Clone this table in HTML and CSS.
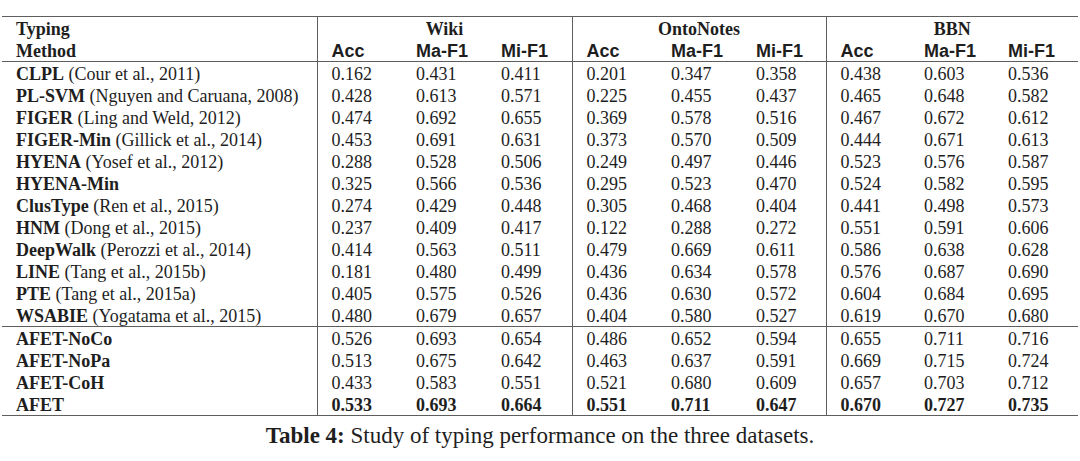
FILE: index.html
```html
<!DOCTYPE html>
<html lang="en">
<head>
<meta charset="utf-8">
<title>Table 4</title>
<link rel="stylesheet" href="styles.css">
</head>
<body>
<div class="page">
  <table class="results">
    <colgroup>
      <col class="c-method">
      <col class="c-num"><col class="c-num"><col class="c-num">
      <col class="c-num"><col class="c-num"><col class="c-num-s">
      <col class="c-num-s"><col class="c-num-s"><col class="c-num-s">
    </colgroup>
    <thead>
      <tr class="hrow">
        <th class="method">Typing</th>
        <th colspan="3" class="grp">Wiki</th>
        <th colspan="3" class="grp">OntoNotes</th>
        <th colspan="3" class="grp">BBN</th>
      </tr>
      <tr class="hrow">
        <th class="method">Method</th>
        <th class="metric gs">Acc</th><th class="metric">Ma-F1</th><th class="metric">Mi-F1</th>
        <th class="metric gs">Acc</th><th class="metric">Ma-F1</th><th class="metric">Mi-F1</th>
        <th class="metric gs">Acc</th><th class="metric">Ma-F1</th><th class="metric">Mi-F1</th>
      </tr>
    </thead>
    <tbody class="block">
      <tr><td class="method"><b>CLPL</b> (Cour et al., 2011)</td><td class="gs">0.162</td><td>0.431</td><td>0.411</td><td class="gs">0.201</td><td>0.347</td><td>0.358</td><td class="gs">0.438</td><td>0.603</td><td>0.536</td></tr>
      <tr><td class="method"><b>PL-SVM</b> (Nguyen and Caruana, 2008)</td><td class="gs">0.428</td><td>0.613</td><td>0.571</td><td class="gs">0.225</td><td>0.455</td><td>0.437</td><td class="gs">0.465</td><td>0.648</td><td>0.582</td></tr>
      <tr><td class="method"><b>FIGER</b> (Ling and Weld, 2012)</td><td class="gs">0.474</td><td>0.692</td><td>0.655</td><td class="gs">0.369</td><td>0.578</td><td>0.516</td><td class="gs">0.467</td><td>0.672</td><td>0.612</td></tr>
      <tr><td class="method"><b>FIGER-Min</b> (Gillick et al., 2014)</td><td class="gs">0.453</td><td>0.691</td><td>0.631</td><td class="gs">0.373</td><td>0.570</td><td>0.509</td><td class="gs">0.444</td><td>0.671</td><td>0.613</td></tr>
      <tr><td class="method"><b>HYENA</b> (Yosef et al., 2012)</td><td class="gs">0.288</td><td>0.528</td><td>0.506</td><td class="gs">0.249</td><td>0.497</td><td>0.446</td><td class="gs">0.523</td><td>0.576</td><td>0.587</td></tr>
      <tr><td class="method"><b>HYENA-Min</b></td><td class="gs">0.325</td><td>0.566</td><td>0.536</td><td class="gs">0.295</td><td>0.523</td><td>0.470</td><td class="gs">0.524</td><td>0.582</td><td>0.595</td></tr>
      <tr><td class="method"><b>ClusType</b> (Ren et al., 2015)</td><td class="gs">0.274</td><td>0.429</td><td>0.448</td><td class="gs">0.305</td><td>0.468</td><td>0.404</td><td class="gs">0.441</td><td>0.498</td><td>0.573</td></tr>
      <tr><td class="method"><b>HNM</b> (Dong et al., 2015)</td><td class="gs">0.237</td><td>0.409</td><td>0.417</td><td class="gs">0.122</td><td>0.288</td><td>0.272</td><td class="gs">0.551</td><td>0.591</td><td>0.606</td></tr>
      <tr><td class="method"><b>DeepWalk</b> (Perozzi et al., 2014)</td><td class="gs">0.414</td><td>0.563</td><td>0.511</td><td class="gs">0.479</td><td>0.669</td><td>0.611</td><td class="gs">0.586</td><td>0.638</td><td>0.628</td></tr>
      <tr><td class="method"><b>LINE</b> (Tang et al., 2015b)</td><td class="gs">0.181</td><td>0.480</td><td>0.499</td><td class="gs">0.436</td><td>0.634</td><td>0.578</td><td class="gs">0.576</td><td>0.687</td><td>0.690</td></tr>
      <tr><td class="method"><b>PTE</b> (Tang et al., 2015a)</td><td class="gs">0.405</td><td>0.575</td><td>0.526</td><td class="gs">0.436</td><td>0.630</td><td>0.572</td><td class="gs">0.604</td><td>0.684</td><td>0.695</td></tr>
      <tr><td class="method"><b>WSABIE</b> (Yogatama et al., 2015)</td><td class="gs">0.480</td><td>0.679</td><td>0.657</td><td class="gs">0.404</td><td>0.580</td><td>0.527</td><td class="gs">0.619</td><td>0.670</td><td>0.680</td></tr>
    </tbody>
    <tbody class="block">
      <tr><td class="method"><b>AFET-NoCo</b></td><td class="gs">0.526</td><td>0.693</td><td>0.654</td><td class="gs">0.486</td><td>0.652</td><td>0.594</td><td class="gs">0.655</td><td>0.711</td><td>0.716</td></tr>
      <tr><td class="method"><b>AFET-NoPa</b></td><td class="gs">0.513</td><td>0.675</td><td>0.642</td><td class="gs">0.463</td><td>0.637</td><td>0.591</td><td class="gs">0.669</td><td>0.715</td><td>0.724</td></tr>
      <tr><td class="method"><b>AFET-CoH</b></td><td class="gs">0.433</td><td>0.583</td><td>0.551</td><td class="gs">0.521</td><td>0.680</td><td>0.609</td><td class="gs">0.657</td><td>0.703</td><td>0.712</td></tr>
      <tr class="best"><td class="method"><b>AFET</b></td><td class="gs">0.533</td><td>0.693</td><td>0.664</td><td class="gs">0.551</td><td>0.711</td><td>0.647</td><td class="gs">0.670</td><td>0.727</td><td>0.735</td></tr>
    </tbody>
  </table>
  <p class="caption"><b>Table 4:</b> Study of typing performance on the three datasets.</p>
</div>
</body>
</html>
```

FILE: styles.css
```css
html, body {
  margin: 0;
  padding: 0;
  background: #ffffff;
}

.page {
  padding: 16px 2px 0 2px;
  color: #1e1e1e;
  font-family: "Liberation Serif", "Times New Roman", serif;
  font-size: 18px;
}

.results {
  width: 1076px;
  border-collapse: collapse;
  table-layout: fixed;
  border-top: 1px solid #5e5e5e;
  border-bottom: 1px solid #5e5e5e;
}

.c-method { width: 315px; }
.c-num { width: 85px; }
.c-num-s { width: 84px; }

.results th,
.results td {
  padding: 3px 0 0 14px;
  height: 22px;
  box-sizing: border-box;
  line-height: 19px;
  text-align: left;
  vertical-align: top;
  white-space: nowrap;
  font-weight: normal;
}

.results .gs {
  border-left: 1px solid #5e5e5e;
}

.results .grp {
  border-left: 1px solid #5e5e5e;
  text-align: center;
  font-weight: bold;
  padding-left: 0;
}

.results th.method {
  font-weight: bold;
}

.results .metric {
  font-family: "Liberation Sans", Arial, sans-serif;
  font-weight: bold;
}

.results thead tr:last-child th {
  border-bottom: 1px solid #5e5e5e;
}

.results tbody.block + tbody.block tr:first-child td {
  border-top: 1px solid #5e5e5e;
}

.results tr.best td {
  font-weight: bold;
}

.caption {
  margin: 8px 0 0 0;
  text-align: center;
  font-size: 23px;
  line-height: 24px;
}
```
